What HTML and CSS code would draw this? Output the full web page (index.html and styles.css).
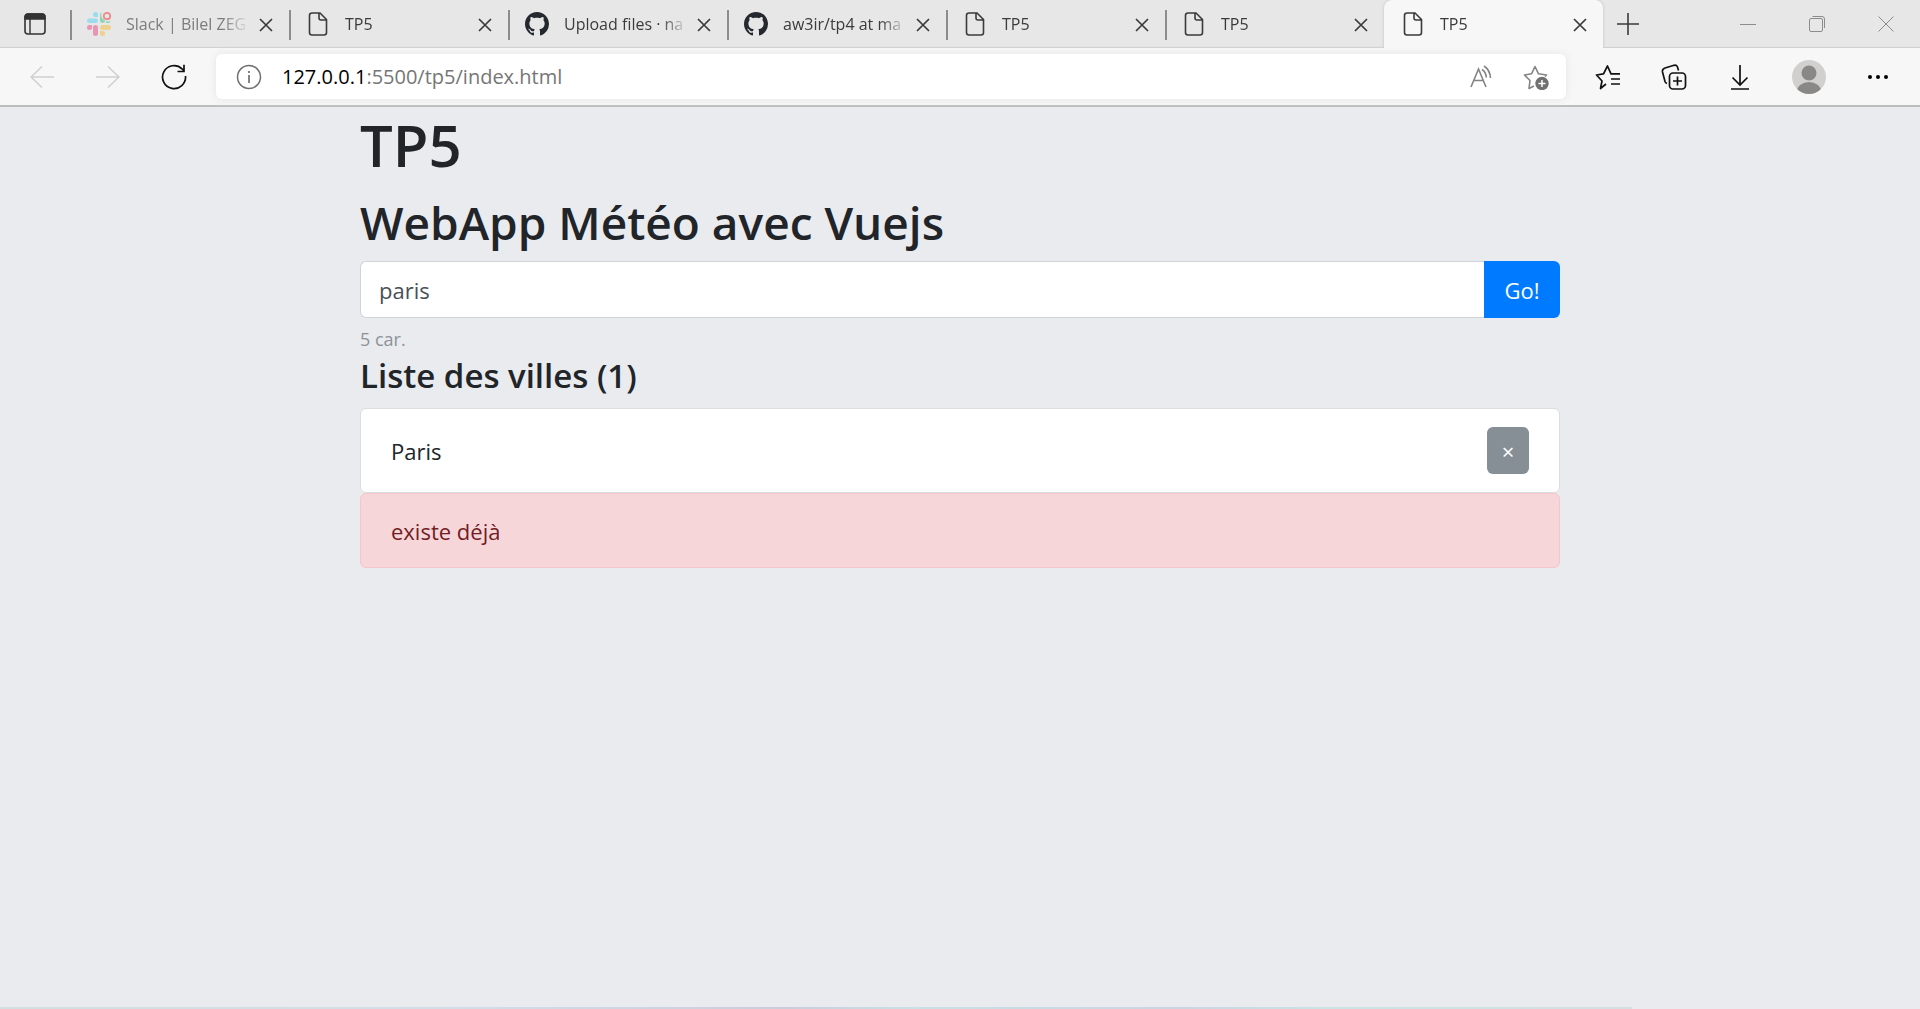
FILE: index.html
```html
<!DOCTYPE html>
<html lang="fr">
<head>
<meta charset="utf-8">
<meta name="viewport" content="width=device-width, initial-scale=1">
<title>TP5</title>
<link rel="stylesheet" href="styles.css">
</head>
<body>
<svg class="defs" aria-hidden="true">
  <symbol id="doc" viewBox="0 0 24 24"><path d="M5.500 1h8.500l6.500 6.500v13a2.500 2.500 0 0 1-2.500 2.500H6A2.500 2.500 0 0 1 3.500 20.500V3.500A2.500 2.500 0 0 1 6 1M13 1.500V6a2 2 0 0 0 2 2h5" fill="none" stroke="#3b3b3b" stroke-width="1.600"/></symbol>
  <symbol id="x" viewBox="0 0 14 14"><path d="M1 1l12 12M13 1L1 13" fill="none" stroke="#3b3b3b" stroke-width="1.700"/></symbol>
  <symbol id="github" viewBox="0 0 16 16"><path fill="#24292f" d="M8 0C3.580 0 0 3.580 0 8c0 3.540 2.290 6.530 5.470 7.590.4.070.55-.17.55-.38 0-.19-.01-.82-.01-1.490-2.010.37-2.530-.49-2.690-.94-.09-.23-.48-.94-.82-1.130-.28-.15-.68-.52-.01-.53.63-.01 1.080.58 1.230.82.72 1.210 1.870.87 2.330.66.070-.52.28-.87.51-1.070-1.780-.2-3.640-.89-3.640-3.950 0-.87.31-1.590.82-2.150-.08-.2-.36-1.020.08-2.120 0 0 .67-.21 2.200.82.64-.18 1.320-.27 2-.27s1.360.09 2 .27c1.530-1.040 2.200-.82 2.200-.82.44 1.100.16 1.920.08 2.120.51.56.82 1.270.82 2.150 0 3.070-1.870 3.750-3.650 3.950.29.25.54.73.54 1.480 0 1.070-.01 1.930-.01 2.200 0 .21.15.46.55.38A8.010 8.010 0 0 0 16 8c0-4.420-3.580-8-8-8z"/></symbol>
</svg>

<header>
  <div class="tabbar">
    <button class="tab-menu" aria-label="Menu des onglets"><svg width="22" height="22" viewBox="0 0 22 22"><rect x="1" y="1" width="20" height="20" rx="3" fill="none" stroke="#333" stroke-width="1.600"/><path d="M1 6V4a3 3 0 0 1 3-3h14a3 3 0 0 1 3 3v2zM6 6v15" fill="#333" stroke="#333" stroke-width="1.400"/></svg></button>
    <div class="tab muted">
      <svg class="fav" viewBox="0 0 24 24"><g fill="#e995b4"><rect x="6" y="13" width="5" height="11" rx="2.500"/><path d="M5 13v2.500A2.500 2.500 0 1 1 2.500 13z"/></g><g fill="#9bdcf0"><rect x="0" y="6.500" width="11" height="4.500" rx="2.250"/><path d="M11 5H8.500A2.500 2.500 0 1 1 11 2.500z"/></g><g fill="#edd28f"><rect x="13" y="13" width="11" height="5" rx="2.500"/><path d="M13 19h2.500a2.500 2.500 0 1 1-2.500 2.500z"/></g><path d="M13 8.500a2.500 2.500 0 0 0 5 0V8a5 5 0 0 1-3-7.500 2.500 2.500 0 0 0-2 2.500zM19 11V9q2 1 4.500-.3A2.500 2.500 0 0 1 21.500 11z" fill="#95d3b7"/><circle cx="20" cy="4" r="3.200" fill="none" stroke="#f08a8a" stroke-width="1.800"/></svg>
      <span class="title">Slack | Bilel ZEG</span><button class="close" aria-label="Fermer"><svg><use href="#x"/></svg></button>
    </div>
    <div class="tab"><svg class="fav"><use href="#doc"/></svg><span class="title">TP5</span><button class="close" aria-label="Fermer"><svg><use href="#x"/></svg></button></div>
    <div class="tab"><svg class="fav"><use href="#github"/></svg><span class="title">Upload files · na</span><button class="close" aria-label="Fermer"><svg><use href="#x"/></svg></button></div>
    <div class="tab"><svg class="fav"><use href="#github"/></svg><span class="title">aw3ir/tp4 at ma</span><button class="close" aria-label="Fermer"><svg><use href="#x"/></svg></button></div>
    <div class="tab"><svg class="fav"><use href="#doc"/></svg><span class="title">TP5</span><button class="close" aria-label="Fermer"><svg><use href="#x"/></svg></button></div>
    <div class="tab"><svg class="fav"><use href="#doc"/></svg><span class="title">TP5</span><button class="close" aria-label="Fermer"><svg><use href="#x"/></svg></button></div>
    <div class="tab active"><svg class="fav"><use href="#doc"/></svg><span class="title">TP5</span><button class="close" aria-label="Fermer"><svg><use href="#x"/></svg></button></div>
    <button class="new-tab" aria-label="Nouvel onglet"><svg width="22" height="22" viewBox="0 0 22 22"><path d="M11 0v22M0 11h22" stroke="#3b3b3b" stroke-width="1.600"/></svg></button>
    <div class="window">
      <button aria-label="Réduire"><svg width="16" height="16" viewBox="0 0 16 16"><path d="M0 8.500h16" stroke="#8c8c8c"/></svg></button>
      <button aria-label="Restaurer"><svg width="16" height="16" viewBox="0 0 16 16" fill="none" stroke="#8c8c8c"><rect x=".5" y="2.500" width="13" height="13" rx="1.500"/><path d="M3.500.5H13A2.500 2.500 0 0 1 15.500 3v9"/></svg></button>
      <button aria-label="Fermer la fenêtre"><svg width="16" height="16" viewBox="0 0 16 16"><path d="M.5.5l15 15M15.500.5l-15 15" stroke="#8c8c8c"/></svg></button>
    </div>
  </div>

  <nav class="toolbar">
    <button aria-label="Précédent"><svg width="24" height="24" viewBox="0 0 24 24"><path d="M24 12H1M12 1.500L1 12l11 10.500" fill="none" stroke="#cfcfcf" stroke-width="1.500"/></svg></button>
    <button aria-label="Suivant"><svg width="24" height="24" viewBox="0 0 24 24"><path d="M0 12h23M12 1.500L23 12 12 22.500" fill="none" stroke="#cfcfcf" stroke-width="1.500"/></svg></button>
    <button aria-label="Actualiser"><svg width="26" height="26" viewBox="0 0 26 26"><path d="M24.500 12A11.500 11.500 0 1 1 21 4.800L23 7M23 .8V7.500h-6.500" fill="none" stroke="#111" stroke-width="1.700"/></svg></button>
    <div class="omnibox">
      <button class="info" aria-label="Informations sur le site"><svg width="26" height="26" viewBox="0 0 26 26"><circle cx="13" cy="13" r="11.500" fill="none" stroke="#707070" stroke-width="1.500"/><path d="M13 11v8M13 7v2" stroke="#707070" stroke-width="1.700"/></svg></button>
      <a class="url" href="#"><b>127.0.0.1</b>:5500/tp5/index.html</a>
      <button aria-label="Lecture à voix haute"><svg width="24" height="24" viewBox="0 0 24 24" fill="none" stroke="#848484" stroke-width="1.600"><path d="M1 22L8.500 4 16 22M3.700 15.500h9.600M12 4.500q4 2.500 4.300 8M14 1q6 4 6.500 12"/></svg></button>
      <button aria-label="Ajouter aux favoris"><svg width="26" height="26" viewBox="0 0 26 26"><path d="M11 22l-5 2.500 1-8L1.500 11l7-1.200L12 2.500l3.500 7.300 8 1.200-1.500 1.500" fill="none" stroke="#848484" stroke-width="1.600" stroke-linejoin="round"/><circle cx="19" cy="19.500" r="6.700" fill="#707070"/><path d="M19 16v7M15.500 19.500h7" stroke="#fff" stroke-width="1.500"/></svg></button>
    </div>
    <button aria-label="Favoris"><svg width="26" height="26" viewBox="0 0 26 26"><path d="M11 20l-5.500 4.500L7 17 1.500 11l7-1.200L12.500 2l3.500 7.800h9M16 15h9M16 20h9" fill="none" stroke="#111" stroke-width="1.700" stroke-linejoin="round"/></svg></button>
    <button aria-label="Collections"><svg width="26" height="26" viewBox="0 0 26 26" fill="none" stroke="#111" stroke-width="1.700"><rect x="8.500" y="9" width="16" height="16" rx="3.500"/><path d="M16.500 12.500v9M12 17h9M6 19.500Q4.500 19 4 17.500L1.500 8Q1 5 4 4l9-2.700q2.500-.6 3.500 1.700l1 3.500"/></svg></button>
    <button aria-label="Téléchargements"><svg width="26" height="26" viewBox="0 0 26 26"><path d="M13 1v20M5.500 13.500L13 21l7.500-7.500M4 25h18" fill="none" stroke="#111" stroke-width="1.700"/></svg></button>
    <button class="profile" aria-label="Profil"><svg width="34" height="34" viewBox="0 0 34 34"><clipPath id="disc"><circle cx="17" cy="17" r="17"/></clipPath><g clip-path="url(#disc)"><path d="M0 0h34v34H0z" fill="#d2d0ce"/><circle cx="17" cy="13" r="7.500" fill="#8a8886"/><ellipse cx="17" cy="31" rx="12" ry="9" fill="#8a8886"/></g></svg></button>
    <button aria-label="Paramètres"><svg width="20" height="4" viewBox="0 0 20 4"><circle cx="2" cy="2" r="2"/><circle cx="10" cy="2" r="2"/><circle cx="18" cy="2" r="2"/></svg></button>
  </nav>
</header>

<main>
  <div class="container">
    <h1>TP5</h1>
    <h2>WebApp Météo avec Vuejs</h2>
    <form class="search">
      <input type="text" value="paris" aria-label="Ville">
      <button type="button">Go!</button>
    </form>
    <small>5 car.</small>
    <h3>Liste des villes (1)</h3>
    <ul class="cities">
      <li>Paris <button aria-label="Supprimer Paris">×</button></li>
    </ul>
    <div class="alert" role="alert">existe déjà</div>
  </div>
</main>
<footer><div class="edge"></div></footer>
</body>
</html>
```
FILE: styles.css
```css
* { box-sizing: border-box; }

body {
  margin: 0;
  min-height: 100vh;
  display: flex;
  flex-direction: column;
  background: #e9ebee;
  color: #212529;
  font: 22px/36px "Segoe UI", "Open Sans", "Noto Sans", sans-serif;
}

button { border: 0; padding: 0; background: none; font: inherit; color: inherit; }
svg { display: block; flex: none; }
.defs { position: absolute; width: 0; height: 0; }

/* Tab strip */
.tabbar {
  height: 48px;
  display: flex;
  background: #e7e7e7;
  box-shadow: inset 0 -2px 1px -1px #cfcfcf;
}
.tabbar button { display: grid; place-items: center; }
.tab-menu { width: 70px; flex: none; }
.tab {
  flex: 0 1 219px;
  min-width: 0;
  display: flex;
  align-items: center;
  gap: 15px;
  padding: 0 15px 0 17px;
  background: linear-gradient(#8d8d8d, #8d8d8d) 0 10px / 2px 30px no-repeat;
}
.fav { width: 24px; height: 24px; }
.title {
  flex: 1;
  height: 24px;
  overflow: hidden;
  white-space: nowrap;
  font-size: 16px;
  line-height: 24px;
  color: #3b3b3b;
  mask-image: linear-gradient(to right, #000 75%, transparent 96%);
}
.muted .title { color: #7c7c7c; }
.close { width: 16px; margin-left: -12px; padding-top: 2px; }
.close svg { width: 14px; height: 14px; }
.active {
  background: #f7f7f7;
  border-radius: 8px 8px 0 0;
  box-shadow: 0 0 3px #bdbdbd;
  clip-path: inset(0 -4px 0 -4px);
}
.new-tab { width: 50px; }
.window { display: flex; margin-left: auto; }
.window button { width: 69px; }

/* Address bar */
.toolbar {
  display: flex;
  align-items: center;
  height: 59px;
  padding: 0 9px;
  background: #f7f7f7;
  border-bottom: 2px solid #bdbdbd;
}
.toolbar button { width: 66px; height: 45px; flex: none; display: grid; place-items: center; }
.toolbar .profile { width: 72px; }
.omnibox {
  flex: 1;
  min-width: 0;
  height: 45px;
  margin: 0 9px;
  padding-right: 3px;
  display: flex;
  align-items: center;
  background: #fff;
  border-radius: 6px;
  box-shadow: 0 0 8px #e4e4e4;
}
.omnibox button { width: 54px; }
.omnibox .info { width: 66px; }
.url { flex: 1; font-size: 20px; color: #767676; text-decoration: none; overflow: hidden; }
.url b { font-weight: 400; color: #000; }

/* Page */
main { flex: 1; }
.container { max-width: 1200px; margin: 0 auto; }
h1, h2, h3 { margin: 0 0 8px; font-weight: 600; }
h1 { font-size: 58px; line-height: 76px; }
h2 { font-size: 46px; line-height: 62px; }
h3 { font-size: 33px; line-height: 48px; }
.search { display: flex; height: 57px; }
.search input {
  flex: 1;
  min-width: 0;
  padding: 0 18px;
  border: 1px solid #ced4da;
  border-right: 0;
  border-radius: 6px 0 0 6px;
  background: #fff;
  color: #495057;
  font: inherit;
}
.search button { width: 76px; background: #007bff; color: #fff; border-radius: 0 6px 6px 0; }
small { display: block; padding-top: 8px; font-size: 18px; line-height: 26px; color: #8c9399; }
.cities { list-style: none; margin: 0; padding: 0; }
.cities li {
  display: flex;
  align-items: center;
  justify-content: space-between;
  padding: 18px 30px;
  background: #fff;
  border: 1px solid #dcdddf;
  border-radius: 6px;
}
.cities button { width: 42px; height: 47px; border-radius: 6px; background: #868e96; color: #fff; font-size: 22px; }
.alert {
  padding: 19px 30px 18px;
  background: #f6d6d9;
  border: 1px solid #f5c6cb;
  border-radius: 6px;
  color: #721c24;
}
.edge { height: 2px; width: 85%; background: linear-gradient(90deg, #d2dfe0, #d2dce6 30%, #cacdda 48%, #c9e0e4 56%, #cbd4e0 72%, #c9e3e4 81%, #d5dfe2); }
```
